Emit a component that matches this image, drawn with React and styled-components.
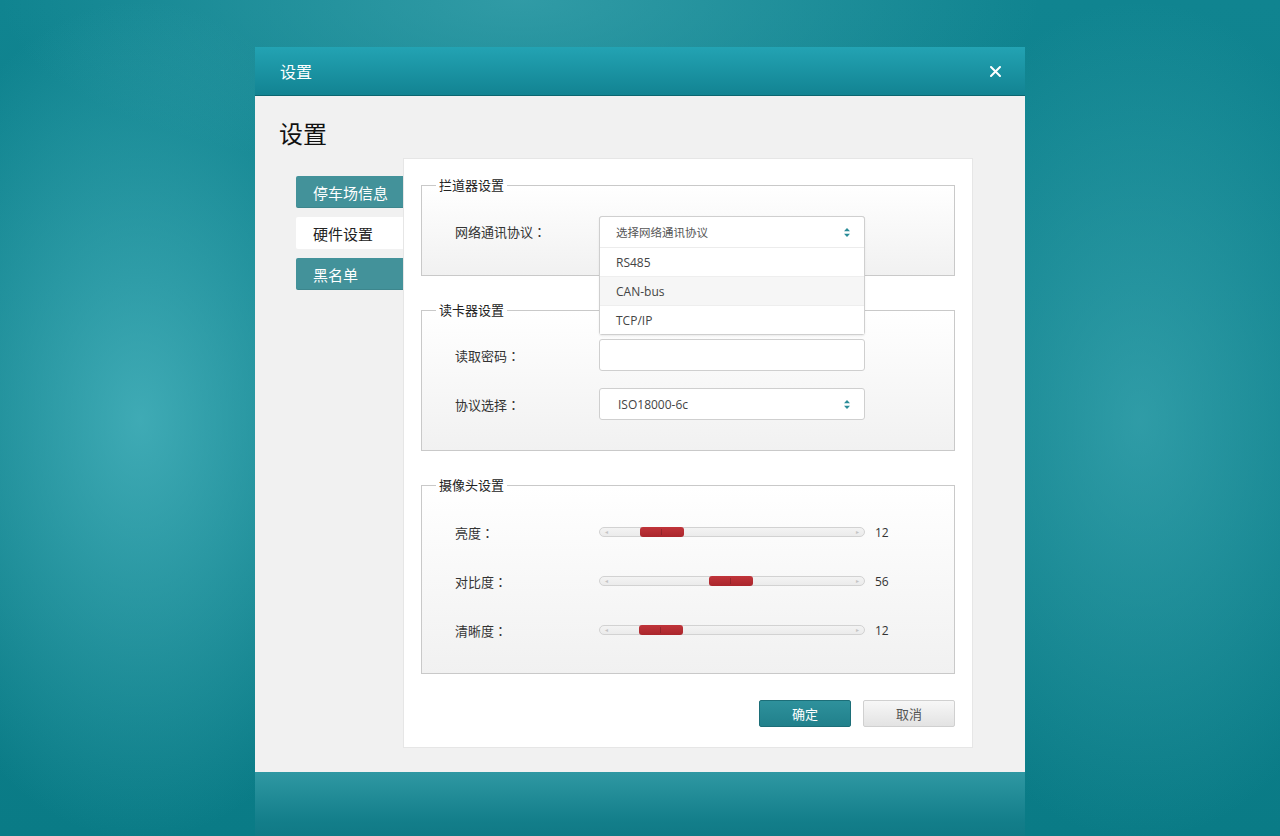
import React from "react";
import styled, { createGlobalStyle } from "styled-components";

const Global = createGlobalStyle`
  html, body { margin: 0; padding: 0; }
  body {
    height: 836px;
    overflow: hidden;
    font-family: "Open Sans", "Noto Sans CJK SC", sans-serif;
    background-color: #0a7b86;
    background-image:
      radial-gradient(ellipse 260px 420px at 140px 420px, rgba(80,185,195,0.75), rgba(80,185,195,0) 100%),
      radial-gradient(ellipse 260px 420px at 1140px 420px, rgba(70,175,185,0.6), rgba(70,175,185,0) 100%),
      radial-gradient(ellipse 520px 180px at 520px 0px, rgba(70,170,180,0.6), rgba(70,170,180,0) 100%),
      linear-gradient(#108490, #0a7b86);
  }
`;

const FONT = `"Open Sans", "Noto Sans CJK SC", sans-serif`;
const CJK = `"Noto Sans CJK SC", sans-serif`;

const Page = styled.div`
  display: flex;
  justify-content: center;
  padding-top: 47px;
`;

const Dialog = styled.div`
  width: 770px;
  display: flex;
  flex-direction: column;
  flex-shrink: 0;
  & > * { flex-shrink: 0; }
`;

const Header = styled.div`
  height: 48px;
  border-bottom: 1px solid #0b6670;
  background: linear-gradient(#23a3b3, #128392);
  display: flex;
  align-items: center;
  justify-content: space-between;
  padding: 0 24px 0 25px;
`;

const HeaderTitle = styled.div`
  color: #ffffff;
  font-family: ${CJK};
  font-size: 16px;
`;

const Close = styled.div`
  color: #ffffff;
  display: flex;
  align-items: center;
  padding-top: 1px;
`;

const Body = styled.div`
  background: #f1f1f1;
  padding: 22px 52px 24px 24px;
`;

const Heading = styled.h1`
  margin: 0 0 10px 0;
  font-family: ${CJK};
  font-weight: 400;
  font-size: 24px;
  line-height: 30px;
  color: #111;
`;

const Row = styled.div`
  display: flex;
  align-items: flex-start;
`;

const Sidebar = styled.div`
  width: 107px;
  margin: 18px 0 0 17px;
  display: flex;
  flex-direction: column;
  gap: 9px;
`;

const Tab = styled.div`
  height: 32px;
  box-sizing: border-box;
  padding-left: 17px;
  display: flex;
  align-items: center;
  font-family: ${CJK};
  font-size: 15px;
  border-radius: 2px 0 0 2px;
  color: ${(p) => (p.$active ? "#222" : "#fff")};
  background: ${(p) => (p.$active ? "#ffffff" : "#43929a")};
  box-shadow: ${(p) => (p.$active ? "none" : "inset 0 -1px 0 rgba(0,0,0,0.08)")};
`;

const Panel = styled.div`
  width: 570px;
  height: 590px;
  box-sizing: border-box;
  background: #fff;
  border: 1px solid #e6e6e6;
  padding: 17px 17px 0 17px;
  display: flex;
  flex-direction: column;
  gap: 25px;
`;

const Fieldset = styled.fieldset`
  position: relative;
  z-index: ${(p) => p.$z || 0};
  margin: 0;
  border: 1px solid #c9c9c9;
  padding: ${(p) => p.$pad};
  min-width: 0;
  background: linear-gradient(#ffffff, #f1f1f1);
`;

const Legend = styled.legend`
  font-family: ${CJK};
  font-size: 13px;
  color: #222;
  padding: 0 3px;
  margin-left: 14px;
  line-height: 18px;
`;

const FieldRow = styled.div`
  display: flex;
  align-items: center;
  height: ${(p) => p.$h || 32}px;
  margin-top: ${(p) => p.$mt || 0}px;
`;

const Label = styled.div`
  width: 144px;
  padding-left: 33px;
  font-family: ${CJK};
  font-size: 13px;
  color: #333;
`;

const Colon = styled.span`
  font-family: "Noto Sans CJK TC", sans-serif;
`;

const Control = styled.div`
  position: relative;
  width: 266px;
  height: ${(p) => p.$h || 32}px;
  box-sizing: border-box;
  border: 1px solid #cfcfcf;
  border-radius: 3px;
  background: #fff;
  display: flex;
  align-items: center;
  padding: 0 14px 0 18px;
  font-family: ${FONT};
  font-size: 12px;
  color: #444;
`;

const SelectText = styled.span`
  flex: 1;
`;

const Menu = styled.div`
  position: absolute;
  left: -1px;
  top: -1px;
  width: 266px;
  box-sizing: border-box;
  border: 1px solid #cfcfcf;
  border-radius: 3px;
  background: #fff;
  box-shadow: 0 1px 2px rgba(0,0,0,0.08);
  z-index: 5;
`;

const MenuHead = styled.div`
  height: 30px;
  display: flex;
  align-items: center;
  padding: 0 14px 0 16px;
  border-bottom: 1px solid #ececec;
  font-family: ${CJK};
  font-size: 11.5px;
  color: #555;
`;

const MenuItem = styled.div`
  height: 28px;
  display: flex;
  align-items: center;
  padding-left: 16px;
  font-family: ${FONT};
  font-size: 12px;
  color: #444;
  background: ${(p) => (p.$hover ? "#f6f6f6" : "#fff")};
  border-top: ${(p) => (p.$first ? "none" : "1px solid #eeeeee")};
`;

const Arrows = () => (
  <svg width="6" height="9" viewBox="0 0 6 9">
    <path d="M3 0 L6 3.2 H0 Z" fill="#2b8c98" />
    <path d="M3 9 L6 5.8 H0 Z" fill="#2b8c98" />
  </svg>
);

const SliderRow = styled.div`
  display: flex;
  align-items: center;
  height: 20px;
  margin-top: ${(p) => p.$mt || 0}px;
`;

const Track = styled.div`
  position: relative;
  width: 266px;
  height: 10px;
  box-sizing: border-box;
  border: 1px solid #d2d2d2;
  border-radius: 5px;
  background: linear-gradient(#f3f3f3, #ebebeb);
  display: flex;
  align-items: center;
  justify-content: space-between;
  padding: 0 5px;
  color: #c4c4c4;
  font-size: 6px;
`;

const Thumb = styled.div`
  position: absolute;
  top: -1px;
  width: 44px;
  height: 10px;
  border-radius: 3px;
  background: linear-gradient(#c0343a, #aa262c);
  &::after {
    content: "";
    position: absolute;
    left: 21px;
    top: 2px;
    width: 1px;
    height: 6px;
    background: rgba(0,0,0,0.18);
  }
`;

const Value = styled.div`
  margin-left: 10px;
  font-family: ${FONT};
  font-size: 12px;
  color: #333;
`;

const Buttons = styled.div`
  display: flex;
  justify-content: flex-end;
  gap: 12px;
  margin-top: 1px;
`;

const Button = styled.button`
  width: 92px;
  height: 27px;
  border-radius: 2px;
  font-family: ${CJK};
  font-size: 13px;
  cursor: pointer;
  border: 1px solid ${(p) => (p.$primary ? "#1c6e78" : "#d0d0d0")};
  color: ${(p) => (p.$primary ? "#fff" : "#555")};
  background: ${(p) =>
    p.$primary ? "linear-gradient(#2e919c, #21808b)" : "linear-gradient(#f7f7f7, #e3e3e3)"};
`;

const Footer = styled.div`
  height: 70px;
  background: linear-gradient(#2f98a3, #137e8a 70%, #0f7884);
`;

const sliders = [
  { label: "亮度", left: 40, value: 12 },
  { label: "对比度", left: 109, value: 56 },
  { label: "清晰度", left: 39, value: 12 },
];

export default function App() {
  return (
    <>
      <Global />
      <Page>
        <Dialog>
          <Header>
            <HeaderTitle>设置</HeaderTitle>
            <Close>
              <svg width="11" height="11" viewBox="0 0 11 11">
                <path d="M1 1 L10 10 M10 1 L1 10" stroke="#fff" strokeWidth="2" strokeLinecap="round" />
              </svg>
            </Close>
          </Header>
          <Body>
            <Heading>设置</Heading>
            <Row>
              <Sidebar>
                <Tab>停车场信息</Tab>
                <Tab $active>硬件设置</Tab>
                <Tab>黑名单</Tab>
              </Sidebar>
              <Panel>
                <Fieldset $pad="22px 0 28px 0" $z={3}>
                  <Legend>拦道器设置</Legend>
                  <FieldRow $h={31}>
                    <Label>网络通讯协议<Colon>：</Colon></Label>
                    <Control $h={31}>
                      <Menu>
                        <MenuHead>
                          <SelectText>选择网络通讯协议</SelectText>
                          <Arrows />
                        </MenuHead>
                        <MenuItem $first>RS485</MenuItem>
                        <MenuItem $hover>CAN-bus</MenuItem>
                        <MenuItem>TCP/IP</MenuItem>
                      </Menu>
                    </Control>
                  </FieldRow>
                </Fieldset>
                <Fieldset $pad="20px 0 30px 0">
                  <Legend>读卡器设置</Legend>
                  <FieldRow>
                    <Label>读取密码<Colon>：</Colon></Label>
                    <Control />
                  </FieldRow>
                  <FieldRow $mt={17}>
                    <Label>协议选择<Colon>：</Colon></Label>
                    <Control>
                      <SelectText>ISO18000-6c</SelectText>
                      <Arrows />
                    </Control>
                  </FieldRow>
                </Fieldset>
                <Fieldset $pad="28px 0 33px 0">
                  <Legend>摄像头设置</Legend>
                  {sliders.map((s, i) => (
                    <SliderRow key={i} $mt={i ? 29 : 0}>
                      <Label>{s.label}<Colon>：</Colon></Label>
                      <Track>
                        <span>◂</span>
                        <span>▸</span>
                        <Thumb style={{ left: s.left }} />
                      </Track>
                      <Value>{s.value}</Value>
                    </SliderRow>
                  ))}
                </Fieldset>
                <Buttons>
                  <Button $primary>确定</Button>
                  <Button>取消</Button>
                </Buttons>
              </Panel>
            </Row>
          </Body>
          <Footer />
        </Dialog>
      </Page>
    </>
  );
}
